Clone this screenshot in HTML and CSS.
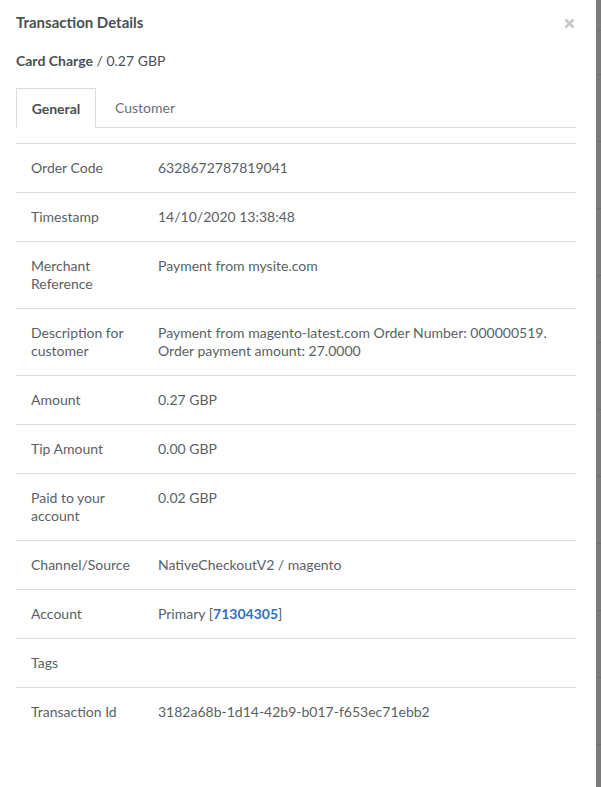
FILE: index.html
```html
<!DOCTYPE html>
<html lang="en">
<head>
<meta charset="utf-8">
<title>Transaction Details</title>
<link rel="stylesheet" href="styles.css">
</head>
<body>
<div class="page">
  <div class="modal">
    <div class="modal-header">
      <h1 class="title">Transaction Details</h1>
      <button class="close" aria-label="Close">
        <svg width="11" height="11" viewBox="0 0 11 11"><path d="M1.5 1.5L9.5 9.5M9.5 1.5L1.5 9.5" stroke="#c8c8c8" stroke-width="2.6" stroke-linecap="butt"/></svg>
      </button>
    </div>
    <p class="subtitle"><strong>Card Charge</strong> / 0.27 GBP</p>
    <div class="tabs">
      <div class="tab active">General</div>
      <div class="tab">Customer</div>
      <div class="tab-rest"></div>
    </div>
    <div class="details">
      <div class="row"><div class="label">Order Code</div><div class="value">6328672787819041</div></div>
      <div class="row"><div class="label">Timestamp</div><div class="value">14/10/2020 13:38:48</div></div>
      <div class="row"><div class="label">Merchant Reference</div><div class="value">Payment from mysite.com</div></div>
      <div class="row"><div class="label">Description for customer</div><div class="value">Payment from magento-latest.com Order Number: 000000519. Order payment amount: 27.0000</div></div>
      <div class="row"><div class="label">Amount</div><div class="value">0.27 GBP</div></div>
      <div class="row"><div class="label">Tip Amount</div><div class="value">0.00 GBP</div></div>
      <div class="row"><div class="label">Paid to your account</div><div class="value">0.02 GBP</div></div>
      <div class="row"><div class="label">Channel/Source</div><div class="value">NativeCheckoutV2 / magento</div></div>
      <div class="row"><div class="label">Account</div><div class="value">Primary [<a class="link" href="#">71304305</a>]</div></div>
      <div class="row"><div class="label">Tags</div><div class="value"></div></div>
      <div class="row"><div class="label">Transaction Id</div><div class="value">3182a68b-1d14-42b9-b017-f653ec71ebb2</div></div>
    </div>
  </div>
  <div class="backdrop"></div>
</div>
</body>
</html>
```
FILE: styles.css
```css
* { box-sizing: border-box; }
html, body { margin: 0; padding: 0; }
body {
  font-family: Lato, "Open Sans", sans-serif;
  font-size: 14px;
  color: #555a60;
  background: #ffffff;
}
.page {
  display: flex;
  width: 601px;
  height: 787px;
  overflow: hidden;
}
.modal {
  width: 596px;
  flex: none;
  background: #ffffff;
  padding: 12px 20px 0 16px;
}
.modal-header {
  display: flex;
  justify-content: space-between;
  align-items: center;
  height: 20px;
}
.title {
  margin: 0;
  font-size: 15px;
  font-weight: 700;
  color: #4a4f55;
}
.close {
  border: 0;
  background: none;
  padding: 0;
  margin: 2px 1px 0 0;
  width: 11px;
  height: 11px;
  display: flex;
}
.subtitle {
  margin: 19px 0 0;
  line-height: 20px;
  color: #4a4f55;
}
.subtitle strong { font-weight: 700; }
.tabs {
  display: flex;
  margin-top: 17px;
  height: 40px;
}
.tab {
  padding: 0 16px 0 19px;
  line-height: 39px;
  border-bottom: 1px solid #dcdcdc;
  color: #6a6e73;
}
.tab.active {
  border: 1px solid #dcdcdc;
  border-bottom-color: transparent;
  font-weight: 700;
  color: #4a4f55;
  width: 80px;
  text-align: center;
  padding: 0;
}
.tab-rest {
  flex: 1;
  border-bottom: 1px solid #dcdcdc;
}
.details {
  margin-top: 15px;
  border-top: 1px solid #dcdcdc;
}
.row {
  display: grid;
  grid-template-columns: 112px 1fr;
  column-gap: 15px;
  padding: 15px;
  line-height: 18px;
  border-bottom: 1px solid #dcdcdc;
  min-height: 49px;
}
.row:last-child { border-bottom: 0; }
.label { color: #5a5f65; }
.value { color: #5a5f65; }
.link {
  color: #2f6fc4;
  font-weight: 700;
  text-decoration: none;
}
.backdrop {
  flex: 1;
  background:
    linear-gradient(#707070, #707070) 0 30px / 100% 1px no-repeat,
    repeating-linear-gradient(to bottom, transparent 0, transparent 66px, #6e6e6e 66px, #6e6e6e 67px) 0 8px / 100% 100%,
    #7b7b7b;
}
```
